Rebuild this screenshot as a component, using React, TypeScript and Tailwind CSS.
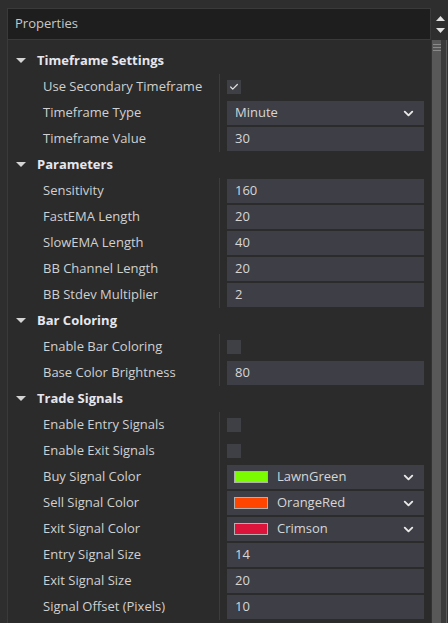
import { ChevronDown, Check } from "lucide-react";

type Row =
  | { label: string; kind: "check"; checked: boolean }
  | { label: string; kind: "text"; value: string }
  | { label: string; kind: "select"; value: string }
  | { label: string; kind: "color"; value: string; swatch: string };

type Section = { title: string; rows: Row[] };

const sections: Section[] = [
  {
    title: "Timeframe Settings",
    rows: [
      { label: "Use Secondary Timeframe", kind: "check", checked: true },
      { label: "Timeframe Type", kind: "select", value: "Minute" },
      { label: "Timeframe Value", kind: "text", value: "30" },
    ],
  },
  {
    title: "Parameters",
    rows: [
      { label: "Sensitivity", kind: "text", value: "160" },
      { label: "FastEMA Length", kind: "text", value: "20" },
      { label: "SlowEMA Length", kind: "text", value: "40" },
      { label: "BB Channel Length", kind: "text", value: "20" },
      { label: "BB Stdev Multiplier", kind: "text", value: "2" },
    ],
  },
  {
    title: "Bar Coloring",
    rows: [
      { label: "Enable Bar Coloring", kind: "check", checked: false },
      { label: "Base Color Brightness", kind: "text", value: "80" },
    ],
  },
  {
    title: "Trade Signals",
    rows: [
      { label: "Enable Entry Signals", kind: "check", checked: false },
      { label: "Enable Exit Signals", kind: "check", checked: false },
      { label: "Buy Signal Color", kind: "color", value: "LawnGreen", swatch: "#7cfc00" },
      { label: "Sell Signal Color", kind: "color", value: "OrangeRed", swatch: "#ff4500" },
      { label: "Exit Signal Color", kind: "color", value: "Crimson", swatch: "#dc143c" },
      { label: "Entry Signal Size", kind: "text", value: "14" },
      { label: "Exit Signal Size", kind: "text", value: "20" },
      { label: "Signal Offset (Pixels)", kind: "text", value: "10" },
    ],
  },
];

function Value({ row }: { row: Row }) {
  if (row.kind === "check") {
    return (
      <div className="w-[14px] h-[14px] bg-[#3f3f46] flex items-center justify-center">
        {row.checked && <Check className="w-[10px] h-[10px] text-[#e0e0e0]" strokeWidth={3} />}
      </div>
    );
  }
  const box = "w-[197px] h-[24px] bg-[#3e3e46] flex items-center pl-2 pr-2 text-[#d6d6d6]";
  if (row.kind === "text") {
    return <div className={box}>{row.value}</div>;
  }
  return (
    <div className={box}>
      {row.kind === "color" && (
        <span
          className="w-[34px] h-[12px] border border-[#b0b0b0] mr-[9px] ml-[-1px]"
          style={{ backgroundColor: row.swatch }}
        />
      )}
      <span className="flex-1">{row.value}</span>
      <ChevronDown className="w-[15px] h-[15px] text-[#e8e8e8]" strokeWidth={3} />
    </div>
  );
}

export default function App() {
  return (
    <div
      className="w-[448px] h-[623px] bg-[#2e2e2e] pt-2 pl-[7px] overflow-hidden flex text-[13px]"
      style={{ fontFamily: '"Open Sans", "Noto Sans", sans-serif' }}
    >
      {/* panel */}
      <div className="w-[424px] flex flex-col">
        <div className="h-[32px] bg-[#1e1e1e] border border-[#3a3a3a] flex items-center pl-[7px] text-[#c8c8c8]">
          Properties
        </div>
        <div className="flex-1 bg-[#2b2b2b] border-l border-[#3a3a3a] pt-[8px]">
          {sections.map((s) => (
            <div key={s.title}>
              <div className="h-[26px] flex items-center">
                <svg width="10" height="6" viewBox="0 0 10 6" className="ml-[8px] mr-[11px]">
                  <polygon points="0,0 10,0 5,5" fill="#d4d4d4" />
                </svg>
                <span className="font-bold text-[#e6e6ee]">{s.title}</span>
              </div>
              {s.rows.map((r) => (
                <div key={r.label} className="h-[26px] flex items-center">
                  <div className="w-[211px] pl-[35px] text-[#d0d0d0] whitespace-nowrap">{r.label}</div>
                  <div className="h-full border-l border-[#3c3c3c] pl-[7px] flex items-center">
                    <Value row={r} />
                  </div>
                </div>
              ))}
            </div>
          ))}
        </div>
      </div>
      {/* scrollbar */}
      <div className="w-[17px] flex flex-col">
        <div className="h-[32px] flex flex-col items-center justify-center gap-[7px] pl-[1px]">
          <svg width="9" height="5" viewBox="0 0 9 5">
            <polygon points="0,5 9,5 4.5,0" fill="#e0e0e0" />
          </svg>
          <svg width="9" height="5" viewBox="0 0 9 5">
            <polygon points="0,0 9,0 4.5,5" fill="#e0e0e0" />
          </svg>
        </div>
        <div className="flex-1 flex bg-[#333333]">
          <div className="w-[9px] ml-[1px] bg-[#585858] flex flex-col gap-[2px] pt-[4px] items-end">
            <div className="w-[8px] h-px bg-[#8a8a8a]" />
            <div className="w-[8px] h-px bg-[#8a8a8a]" />
            <div className="w-[8px] h-px bg-[#8a8a8a]" />
          </div>
          <div className="w-[5px] bg-[#3a3a3a]" />
          <div className="w-px bg-[#5a5a5a]" />
        </div>
      </div>
    </div>
  );
}
